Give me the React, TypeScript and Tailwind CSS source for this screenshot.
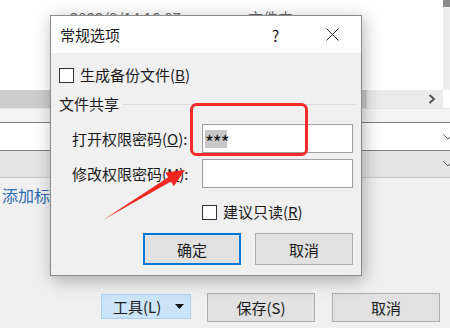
import React from "react";

const font = "font-['Noto_Sans_CJK_SC','Noto_Sans',sans-serif]";

const Box = () => <span className="w-[15px] h-[15px] border border-[#333] bg-white shrink-0" />;

const Chevron = () => (
  <svg width="10" height="6" viewBox="0 0 10 6" className="shrink-0">
    <path d="M0.5 0.5 L5 5 L9.5 0.5" fill="none" stroke="#555" strokeWidth="1" />
  </svg>
);

export default function App() {
  return (
    <div className={`relative w-[450px] h-[328px] overflow-hidden bg-[#f0f0f0] text-[15px] text-[#1a1a1a] ${font}`}>
      {/* background window */}
      <div className="flex flex-col h-full">
        <div className="flex h-[90px] bg-white">
          <div className="flex-1 flex pt-[8px] pl-[70px] text-[#6b6b6b] leading-[20px]">
            <span className="w-[178px]">2022/9/14 16:07</span>
            <span>文件夹</span>
          </div>
          <div className="w-[7px] bg-[#eeeeee] flex flex-col">
            <div className="h-[7px] bg-[#8a8a8a]" />
          </div>
        </div>
        <div className="flex h-[18px]">
          <div className="w-[367px] bg-[#cdcdcd]" />
          <div className="flex-1 bg-[#ebebeb] flex items-center justify-end pr-[7px]">
            <svg width="8" height="10" viewBox="0 0 8 10">
              <path d="M1.5 1 L6 5 L1.5 9" fill="none" stroke="#555" strokeWidth="2" />
            </svg>
          </div>
          <div className="w-[7px] bg-white" />
        </div>
        <div className="h-[14px] bg-[#f4f4f4] border-t border-[#e2e2e2]" />
        <div className="h-[29px] bg-white border-y border-[#7f7f7f] flex items-center justify-end -mr-[3px]">
          <Chevron />
        </div>
        <div className="h-[27px] bg-[#e5e5e5] border-b border-[#c8c8c8] flex items-center justify-end -mr-[3px]">
          <Chevron />
        </div>
        <div className="pl-[2px] pt-[6px] text-[16px] leading-[22px] text-[#2b6cb5]">添加标记</div>
        <div className="flex-1" />
        <div className="flex items-center justify-end pr-[10px] pb-[6px]">
          <button className="w-[90px] h-[25px] mb-[2px] bg-[#cce4f7] border border-[#a9d0f2] flex items-center pl-[11px] pr-[6px] leading-none">
            <span>工具(L)</span>
            <svg width="9" height="5" viewBox="0 0 9 5" className="ml-auto">
              <path d="M0 0 H9 L4.5 5 Z" fill="#111" />
            </svg>
          </button>
          <button className="ml-[16px] w-[108px] h-[29px] bg-[#e1e1e1] border border-[#adadad] leading-none">
            保存(S)
          </button>
          <button className="ml-[17px] w-[108px] h-[29px] bg-[#e1e1e1] border border-[#adadad] leading-none">
            取消
          </button>
        </div>
      </div>

      {/* dialog */}
      <div className="absolute left-[50px] top-[15px] w-[312px] h-[261px] border border-[#8a8a8a] bg-[#f0f0f0] shadow-[2px_4px_16px_rgba(0,0,0,0.3)] flex flex-col">
        <div className="h-[37px] bg-white flex items-center pl-[9px] pr-[6px] shrink-0">
          <span className="leading-[20px]">常规选项</span>
          <span className="ml-auto w-[46px] text-center text-[16px] leading-[20px] pl-[3px]">?</span>
          <span className="ml-[12px] w-[46px] flex justify-center">
            <svg width="13" height="13" viewBox="0 0 13 13">
              <path d="M0.5 0.5 L12.5 12.5 M12.5 0.5 L0.5 12.5" stroke="#222" strokeWidth="1" />
            </svg>
          </span>
        </div>
        <div className="flex flex-col px-[8px]">
          <div className="mt-[12px] h-[20px] flex items-center gap-[6px]">
            <Box />
            <span className="leading-[20px]">
              生成备份文件(<span className="underline">B</span>)
            </span>
          </div>
          <div className="mt-[10px] h-[18px] flex items-center">
            <span className="leading-[18px]">文件共享</span>
            <div className="flex-1 ml-[3px] mr-[-3px] h-px bg-[#dcdcdc]" />
          </div>
          <div className="mt-[11px] h-[29px] flex items-center">
            <span className="pl-[13px] leading-[20px]">
              打开权限密码(<span className="underline">O</span>):
            </span>
            <div className="ml-auto w-[151px] h-[29px] bg-white border border-[#a0a0a0] flex items-center pl-[2px]">
              <span className="bg-[#c8c8c8] w-[22px] h-[18px] text-[19px] leading-[24px] tracking-[-1px] text-center">***</span>
            </div>
          </div>
          <div className="mt-[6px] h-[29px] flex items-center">
            <span className="pl-[13px] leading-[20px]">
              修改权限密码(<span className="underline">M</span>):
            </span>
            <div className="ml-auto w-[151px] h-[29px] bg-white border border-[#a0a0a0]" />
          </div>
          <div className="mt-[14px] h-[20px] flex items-center gap-[6px] pl-[143px]">
            <Box />
            <span className="leading-[20px]">
              建议只读(<span className="underline">R</span>)
            </span>
          </div>
          <div className="mt-[11px] flex justify-end gap-[14px]">
            <button className="w-[98px] h-[32px] bg-[#e1e1e1] border-2 border-[#0078d7] leading-none">确定</button>
            <button className="w-[98px] h-[32px] bg-[#e1e1e1] border border-[#adadad] leading-none">取消</button>
          </div>
        </div>
      </div>

      {/* annotations */}
      <svg className="absolute inset-0 pointer-events-none" width="450" height="328" viewBox="0 0 450 328">
        <rect x="191.5" y="104.5" width="115" height="50" rx="5" fill="none" stroke="#f52a2a" strokeWidth="3" />
        <polygon
          points="103,220 168.3,177.3 165.4,172.6 185,170 173.8,186.2 170.9,181.5"
          fill="#f0261f"
        />
      </svg>
    </div>
  );
}
